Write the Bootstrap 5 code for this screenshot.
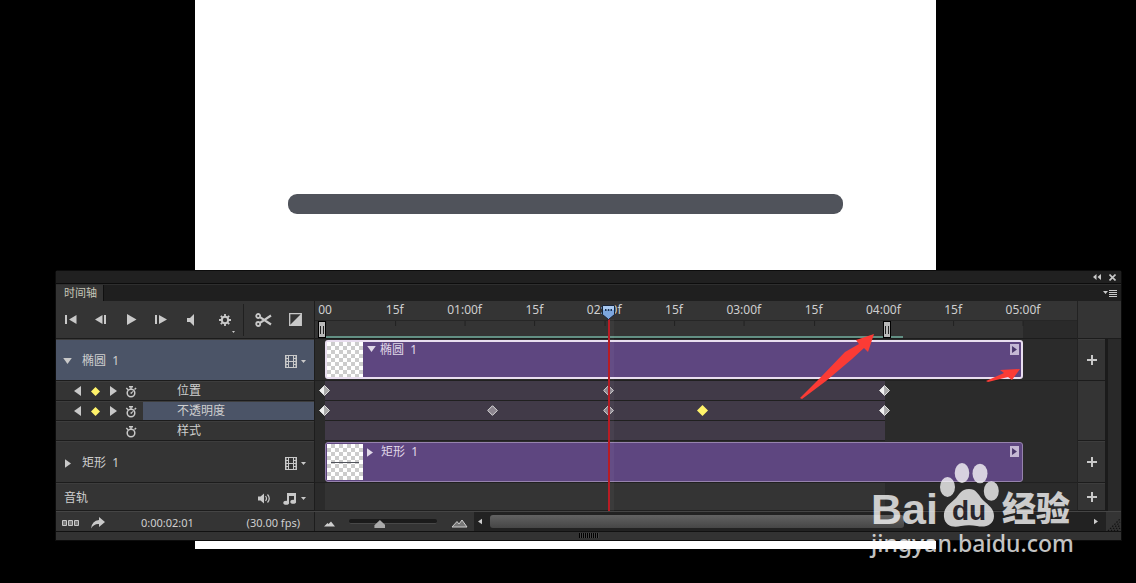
<!DOCTYPE html>
<html lang="zh-CN">
<head>
<meta charset="utf-8">
<meta name="viewport" content="width=device-width, initial-scale=1">
<title>时间轴</title>
<link href="https://cdn.jsdelivr.net/npm/bootstrap@5.3.0/dist/css/bootstrap.min.css" rel="stylesheet">
<style>
body{background:#000;color:#cfcfcf;font:12px/16px "Noto Sans","Noto Sans CJK SC",sans-serif}
.workspace{min-height:100vh;grid-template-columns:minmax(0,1fr);align-items:start}
.workspace>*{grid-area:1/1}
.artboard{background:#fff;height:549px;margin:0 200px 0 195px;padding:194px 93px 0}
.shape-bar{height:20px;border-radius:9px;background:#50535b}
.timeline{margin:270px 14px 0 55px;background:#343434;border:1px solid #0c0c0c;border-radius:3px 3px 0 0}
.title-strip{height:13px;background:#202020;border-bottom:1px solid #0c0c0c;padding-right:1px}
.tab-strip{height:17px;background:#1f1f1f;border-top:1px solid #2e2e2e}
.tab-item{background:#343434;color:#c6c6b8;font-size:11px;line-height:16px;padding:0 6px 0 8px;border-right:1px solid #101010}
.tool{display:flex;align-items:center;justify-content:center;padding:0;border:0;background:none;color:#c9c9c9}
.tool svg,.glyph{display:block;fill:currentColor}
.side{width:259px;border-right:1px solid #1d1d1d}
.h-head{height:38px}.h-layer{height:42px}.h-prop{height:20px}.h-audio{height:28px}
.side>div,.adders>div{border-bottom:1px solid #1c1c1c;border-top:1px solid #3d3d3d}
.side>.toolbar{border-top:0}
.side>.h-layer,.side>.h-audio{padding-top:2px}
.side>.h-layer{padding-left:7px}
.side>.h-prop{padding-left:12px}
.toolbar .tool{width:30px;height:34px}
.toolbar .gear{width:37px}
.divider{width:1px;height:32px;background:#202020}
.selected{background:#4b5467}
.layer-name{margin-left:10px}
.prop-name{flex:1;line-height:18px;margin-left:3px;padding-left:34px}
.key-nav{width:18px;height:18px}
.unfold{width:9px}
.gold{color:#f5ec5a}
.area{background:#2b2b2b}
.lane{margin-left:10px;margin-right:54px}
.ruler{background:#343434;height:38px;border-bottom:1px solid #1c1c1c}
.ruler-top{height:20px;border-bottom:1px solid #262626;font-size:11px}
.tick{position:absolute;top:1px;transform:translateX(-50%);line-height:15px;white-space:nowrap}
.tick::after{content:"";position:absolute;left:50%;top:19px;height:5px;width:1px;background:#222}
.ruler-low{height:17px;background:#2a2a2a;width:54px;position:absolute;right:0;top:20px}
.cache{position:absolute;left:0;bottom:0;height:2px;background:#639084}
.grip{position:absolute;bottom:0;width:8px;height:17px;border:1px solid #000;background:#b8b8b8;display:flex;justify-content:center;align-items:center;padding:0;z-index:2}
.grip::after{content:"";width:4px;height:8px;border:solid #222;border-width:0 1px}
.grip.g-start{margin-left:-7px}.grip.g-end{margin-left:-2px}
.rowline{border-bottom:1px solid #202020}
.clip-row{padding-top:1px}
.clip{height:40px;background:#5e4680;color:#e0d8e8;border:1px solid #9683ad;border-radius:3px;padding:1px}
.clip.active{height:39px;border:2px solid #e9def0;padding:0}
.thumb{width:36px;background:repeating-conic-gradient(#ccc 0 25%,#fff 0 50%) 0 0/8px 8px}
.clip .more{width:9px;height:11px;background:#c5b8d4;color:#4a376b;margin:2px 2px 0 0}
.prop-fill{width:80.2%;background:#413a48}
.audio-fill{width:80.2%;background:#343434}
.key{position:absolute;top:4px;width:11px;height:11px;margin-left:-6px}
.playhead{position:absolute;top:4px;bottom:0;width:13px;margin-left:-7px;z-index:3}
.playline{position:absolute;left:6px;top:14px;bottom:0;width:2px;background:#b81c24}
.playframe{position:absolute;left:8px;top:14px;bottom:0;width:4px;background:#ffffff0a}
.adders{width:28px;border-left:1px solid #222}
.adders .h-head{width:43px;background:#343434;border-top:0}
.vscroll{width:16px;margin-top:38px;background:#292929;border-left:3px solid #1b1b1b}
.footbar{height:20px;border-top:1px solid #454545;font-size:11px}
.foot-side{width:259px;border-right:1px solid #1d1d1d;padding:3px 14px 0 2px}
.timecode{margin-left:36px}
.zoomer{width:159px;padding:0 6px 0 9px}
.zoomer input{width:88px;height:12px;appearance:none;background:none;margin:0;display:block}
.zoomer input::-webkit-slider-runnable-track{height:5px;background:#1b1b1b;border-bottom:1px solid #484848;border-radius:2px}
.zoomer input::-webkit-slider-thumb{appearance:none;width:11px;height:8px;margin-top:1px;background:#aaa;clip-path:polygon(50% 0,100% 65%,100% 100%,0 100%,0 65%)}
.hscroll{background:#222;color:#ccc}
.hthumb{height:13px;background:linear-gradient(#626262,#464646);border-radius:3px;width:66%}
.base-strip{height:9px;border-top:1px solid #111;background:#323232}
.ridge{width:20px;height:5px;margin-top:1px;background:repeating-linear-gradient(90deg,#000 0 1px,#444 1px 2px)}
.note{position:absolute;z-index:4;fill:#fb3b35;pointer-events:none}
.watermark{justify-self:end;margin:460px 62px 0 0;color:#fff;opacity:.76;z-index:6;width:203px}
.wm-top{height:68px}
.wm-latin{font:bold 43px/37px "Liberation Sans",sans-serif;width:68px}
.wm-cjk{font:900 34px/42px "Noto Sans CJK SC",sans-serif;margin-left:3px}
.wm-url{font:500 23px/26px "Noto Sans",sans-serif;margin-top:2px}
</style>
</head>
<body>
<svg width="0" height="0" class="position-absolute" aria-hidden="true">
<symbol id="key-half" viewBox="0 0 11 11"><path d="M5.500.5 10.500 5.500 5.500 10.500z" fill="#aaa"/><path d="M5.500.5v10L.5 5.500z" fill="#f0f0f0"/><path d="m5.500.5 5 5-5 5-5-5z" fill="none" stroke="#ddd"/></symbol>
<symbol id="key-full" viewBox="0 0 11 11"><path d="m5.500.7 4.800 4.800-4.800 4.800L.7 5.500z" fill="#8b848e" stroke="#ddd"/></symbol>
<symbol id="key-gold" viewBox="0 0 11 11"><path d="m5.500 0 5.500 5.500-5.500 5.500L0 5.500z" fill="#fff36a"/></symbol>
<symbol id="film" viewBox="0 0 12 13"><path d="M0 0h12v13H0zM1.500 1v2H3V1zM1.500 4v2H3V4zM1.500 7v2H3V7zM1.500 10v2H3v-2zM4 1v5h4V1zM4 7v5h4V7zM9 1v2h1.500V1zM9 4v2h1.500V4zM9 7v2h1.500V7zM9 10v2h1.500v-2z" fill-rule="evenodd"/></symbol>
<symbol id="watch" viewBox="0 0 12 13"><circle cx="6" cy="8" r="3.800" fill="none" stroke="currentColor" stroke-width="1.500"/><path d="M4 1h4v1.500H6.700V4H5.300V2.500H4zM.8 3.500l1-1 1.800 1.800-1 1zM9 4l1.600-1.600 1 1L10 5z"/></symbol>
<symbol id="hand" viewBox="0 0 12 13"><path d="M5 8 9.500 5 6.500 9z"/></symbol>
<symbol id="down" viewBox="0 0 5 3"><path d="M0 0h5L2.500 3z"/></symbol>
<symbol id="left" viewBox="0 0 7 10"><path d="M7 0v10L0 5z"/></symbol>
<symbol id="right" viewBox="0 0 7 10"><path d="M0 0v10l7-5z"/></symbol>
<symbol id="fold" viewBox="0 0 10 7"><path d="M0 0h10L5 7z"/></symbol>
<symbol id="plus" viewBox="0 0 10 10"><path d="M4 0h2v4h4v2H6v4H4V6H0V4h4z"/></symbol>
</svg>
<main class="workspace d-grid position-relative">
  <section class="artboard" aria-label="画布"><div class="shape-bar"></div></section>

  <section class="timeline" aria-label="时间轴">
    <div class="title-strip d-flex justify-content-end align-items-center">
      <button class="tool px-1" aria-label="折叠"><svg width="8" height="6" viewBox="0 0 8 6"><path d="M3.500 0v6L0 3zM8 0v6L4.500 3z"/></svg></button>
      <button class="tool px-1" aria-label="关闭"><svg width="7" height="7" viewBox="0 0 7 7"><path d="m.5.5 6 6m0-6-6 6" stroke="currentColor" stroke-width="1.600"/></svg></button>
    </div>
    <div class="tab-strip d-flex justify-content-between">
      <div class="tab-item">时间轴</div>
      <button class="tool pe-1" aria-label="面板菜单"><svg width="14" height="9" viewBox="0 0 14 9"><path d="M0 2h5L2.500 5zM6 1h8v1H6zM6 3h8v1H6zM6 5h8v1H6zM6 7h8v1H6z"/></svg></button>
    </div>

    <div class="d-flex">
      <div class="side flex-shrink-0">
        <div class="toolbar h-head d-flex align-items-center">
          <button class="tool" aria-label="转到第一帧"><svg width="12" height="9" viewBox="0 0 12 9"><path d="M0 0h2v9H0zM11.500 0v9L4 4.500z"/></svg></button>
          <button class="tool" aria-label="上一帧"><svg width="12" height="9" viewBox="0 0 12 9"><path d="M7.500 0v9L0 4.500zM9 0h2v9H9z"/></svg></button>
          <button class="tool" aria-label="播放"><svg width="11" height="11" viewBox="0 0 11 11"><path d="M1 0v11l9.500-5.500z"/></svg></button>
          <button class="tool" aria-label="下一帧"><svg width="12" height="9" viewBox="0 0 12 9"><path d="M0 0h2v9H0zM4 0v9l8-4.500z"/></svg></button>
          <button class="tool" aria-label="音频"><svg width="8" height="12" viewBox="0 0 8 12"><path d="M0 4h3l4-4v12L3 8H0z"/></svg></button>
          <button class="tool gear position-relative" aria-label="设置"><svg width="12" height="12" viewBox="0 0 12 12"><circle cx="6" cy="6" r="3.200" fill="none" stroke="currentColor" stroke-width="2"/><path d="M6 0v2.500M6 9.500V12M0 6h2.500M9.500 6H12M1.800 1.800l1.800 1.800M8.400 8.400l1.800 1.800M10.200 1.800 8.400 3.600M3.600 8.400l-1.800 1.800" stroke="currentColor" stroke-width="1.800"/></svg><svg class="position-absolute bottom-0 end-0 mb-1 me-2" width="3" height="2"><use href="#down"/></svg></button>
          <div class="divider"></div>
          <button class="tool ms-1" aria-label="拆分"><svg width="17" height="14" viewBox="0 0 17 14"><g fill="none" stroke="currentColor" stroke-width="1.800"><circle cx="3.200" cy="3" r="2"/><circle cx="3.200" cy="11" r="2"/><path d="M5 4.200 16 11.500M5 9.800 16 2.500" stroke-width="2.200"/></g></svg></button>
          <button class="tool ms-auto me-1" aria-label="过渡效果"><svg width="13" height="13" viewBox="0 0 13 13"><path d="M.7.7h11.600v11.600H.7z" fill="none" stroke="currentColor" stroke-width="1.300"/><path d="M12 1v11H1z"/></svg></button>
        </div>
        <div class="h-layer selected d-flex align-items-center pe-2">
          <button class="tool unfold" aria-label="收起椭圆 1"><svg width="9" height="6"><use href="#fold"/></svg></button>
          <span class="layer-name">椭圆&nbsp; 1</span>
          <button class="tool gap-1 ms-auto" aria-label="视频组"><svg width="12" height="13"><use href="#film"/></svg><svg width="5" height="3"><use href="#down"/></svg></button>
        </div>
        <div class="h-prop d-flex align-items-center">
          <button class="tool key-nav" aria-label="上一关键帧"><svg width="7" height="10"><use href="#left"/></svg></button><button class="tool key-nav gold" aria-label="关键帧"><svg width="9" height="9"><use href="#key-gold"/></svg></button><button class="tool key-nav" aria-label="下一关键帧"><svg width="7" height="10"><use href="#right"/></svg></button><button class="tool key-nav" aria-label="秒表"><svg width="12" height="13"><use href="#watch"/><use href="#hand"/></svg></button>
          <span class="prop-name">位置</span>
        </div>
        <div class="h-prop d-flex align-items-center">
          <button class="tool key-nav" aria-label="上一关键帧"><svg width="7" height="10"><use href="#left"/></svg></button><button class="tool key-nav gold" aria-label="关键帧"><svg width="9" height="9"><use href="#key-gold"/></svg></button><button class="tool key-nav" aria-label="下一关键帧"><svg width="7" height="10"><use href="#right"/></svg></button><button class="tool key-nav" aria-label="秒表"><svg width="12" height="13"><use href="#watch"/><use href="#hand"/></svg></button>
          <span class="prop-name selected">不透明度</span>
        </div>
        <div class="h-prop d-flex align-items-center">
          <span class="key-nav"></span><span class="key-nav"></span><span class="key-nav"></span><button class="tool key-nav" aria-label="秒表"><svg width="12" height="13"><use href="#watch"/></svg></button>
          <span class="prop-name">样式</span>
        </div>
        <div class="h-layer d-flex align-items-center pe-2">
          <button class="tool unfold" aria-label="展开矩形 1"><svg width="6" height="9"><use href="#right"/></svg></button>
          <span class="layer-name">矩形&nbsp; 1</span>
          <button class="tool gap-1 ms-auto" aria-label="视频组"><svg width="12" height="13"><use href="#film"/></svg><svg width="5" height="3"><use href="#down"/></svg></button>
        </div>
        <div class="h-audio d-flex align-items-center ps-2 pe-2">
          <span>音轨</span>
          <button class="tool ms-auto me-2" aria-label="静音"><svg width="13" height="11" viewBox="0 0 13 11"><path d="M0 3.500h2.500L6 .5v10l-3.500-3H0z"/><path d="M7.500 3q2 2.500 0 5M9.500 1.500q3.500 4 0 8" fill="none" stroke="currentColor" stroke-width="1.200"/></svg></button>
          <button class="tool gap-1 ms-1" aria-label="音频选项"><svg width="14" height="13" viewBox="0 0 14 13"><path d="M4 1h9v9h-2V4H6v7H4z"/><ellipse cx="3.200" cy="10.800" rx="2.900" ry="2"/><ellipse cx="10.200" cy="9.800" rx="2.900" ry="2"/></svg><svg width="5" height="3"><use href="#down"/></svg></button>
        </div>
      </div>

      <div class="area flex-grow-1 position-relative">
        <div class="ruler position-relative">
          <div class="ruler-top"></div><div class="ruler-low"></div>
          <div class="lane position-absolute top-0 bottom-0 start-0 end-0" id="ruler">
            <div class="cache" style="width:82.800%"></div>
            <button class="grip g-start" style="left:0%" aria-label="工作区开始"></button>
            <button class="grip g-end" style="left:80.200%" aria-label="工作区结束"></button>
          </div>
        </div>
        <div class="h-layer clip-row rowline"><div class="lane"><div class="clip active d-flex align-items-stretch">
          <div class="thumb"></div><svg class="glyph mt-1 ms-1" width="9" height="6"><use href="#fold"/></svg><span class="ms-1">椭圆&nbsp; 1</span>
          <button class="tool more ms-auto" aria-label="剪辑选项"><svg width="5" height="7"><use href="#right"/></svg></button></div></div></div>
        <div class="h-prop"><div class="lane position-relative h-100 keys" data-keys="0h 40.7f 80.2h"></div></div>
        <div class="h-prop"><div class="lane position-relative h-100 keys" data-keys="0h 24.1f 40.7f 54.1g 80.2h"></div></div>
        <div class="h-prop"><div class="lane position-relative h-100 keys" data-keys=""></div></div>
        <div class="h-layer clip-row rowline"><div class="lane"><div class="clip d-flex align-items-stretch">
          <div class="thumb d-flex align-items-center justify-content-center"><svg width="28" height="1"><path d="M0 0h28v1H0z" fill="#50535b"/></svg></div><svg class="glyph mt-1 ms-1" width="6" height="9"><use href="#right"/></svg><span class="ms-2">矩形&nbsp; 1</span>
          <button class="tool more ms-auto" aria-label="剪辑选项"><svg width="5" height="7"><use href="#right"/></svg></button></div></div></div>
        <div class="h-audio rowline"><div class="lane h-100"><div class="audio-fill h-100"></div></div></div>
        <div class="lane position-absolute top-0 bottom-0 start-0 end-0 pe-none">
          <div class="playhead" style="left:40.700%"><div class="playframe"></div><div class="playline"></div><svg class="position-absolute top-0 start-0" width="13" height="15" viewBox="0 0 13 15"><path d="M.5.500h12v9l-6 5-6-5z" fill="#7da7df" stroke="#17243a"/><path d="M1 1h11v4H1z" fill="#a9c9f0"/><path d="M3 4h1.500v2H3zM5.800 4h1.500v2H5.800zM8.500 4H10v2H8.500z" fill="#1b3355"/></svg></div>
          <svg class="note" style="left:68.100%;top:33px" width="75" height="66" viewBox="0 0 75 66"><path d="M0 64 20 44 45 18 59 10 56 6 74 0 68 18 64 14 52 25 26 47 2 65z"/></svg>
          <svg class="note" style="left:94.700%;top:66px" width="34" height="16" viewBox="0 0 34 16"><path d="M0 14 18 6 14 3 34 2 26 13 22 10 2 15z"/></svg>
        </div>
      </div>

      <div class="adders flex-shrink-0">
        <div class="h-head"></div>
        <div class="h-layer d-flex"><button class="tool flex-fill" aria-label="添加媒体"><svg width="10" height="10"><use href="#plus"/></svg></button></div>
        <div class="h-prop border-0"></div><div class="h-prop border-0"></div><div class="h-prop border-top-0"></div>
        <div class="h-layer d-flex"><button class="tool flex-fill" aria-label="添加媒体"><svg width="10" height="10"><use href="#plus"/></svg></button></div>
        <div class="h-audio d-flex"><button class="tool flex-fill" aria-label="添加音频"><svg width="10" height="10"><use href="#plus"/></svg></button></div>
      </div>
      <div class="vscroll flex-shrink-0"></div>
    </div>

    <div class="footbar d-flex">
      <div class="foot-side flex-shrink-0 d-flex align-items-center">
        <div class="d-flex gap-2">
          <button class="tool ps-1" aria-label="转换为帧动画"><svg width="17" height="8" viewBox="0 0 17 8"><path d="M.5 1.500h4v5h-4zM6.500 1.500h4v5h-4zM12.500 1.500h4v5h-4z" fill="#777" stroke="currentColor"/></svg></button>
          <button class="tool ps-1" aria-label="渲染视频"><svg width="14" height="12" viewBox="0 0 14 12"><path d="M8 0l6 5-6 5V7Q3 6.500 0 11.500 1 3.500 8 3z"/></svg></button>
        </div>
        <span class="timecode">0:00:02:01</span><span class="ms-auto">(30.00 fps)</span>
      </div>
      <label class="zoomer flex-shrink-0 d-flex align-items-center justify-content-between">
        <svg class="glyph mt-1" width="11" height="6" viewBox="0 0 11 6"><path d="M0 5.500 3.500 2l1 1L7 .5l4 5z"/></svg>
        <input type="range" min="0" max="100" value="33" aria-label="时间轴缩放">
        <svg class="glyph mt-1" width="17" height="9" viewBox="0 0 17 9"><path d="m1 8 5-5.500L8 5l3-4 5 7z" fill="#777" stroke="currentColor"/></svg>
      </label>
      <div class="hscroll flex-grow-1 d-flex align-items-center ps-1">
        <svg class="glyph me-2" width="4" height="7"><use href="#left"/></svg>
        <div class="hthumb"></div>
        <svg class="glyph ms-auto me-2" width="4" height="7"><use href="#right"/></svg>
      </div>
      <svg class="glyph flex-shrink-0 align-self-end" width="15" height="14" viewBox="0 0 15 14"><path d="M2 14 14 2M5 14l9-9M8 14l6-6M11 14l3-3" stroke="#111" stroke-width="1.200" stroke-dasharray="1.500 1.500"/></svg>
    </div>
    <div class="base-strip d-flex justify-content-center"><div class="ridge"></div></div>
  </section>

  <aside class="watermark">
    <div class="wm-top d-flex align-items-end">
      <span class="wm-latin">Bai</span>
      <svg width="60" height="68" viewBox="0 0 60 68" fill="#fff" class="flex-shrink-0"><ellipse cx="8.500" cy="27" rx="7.500" ry="10"/><ellipse cx="23" cy="13" rx="7.300" ry="10"/><ellipse cx="41" cy="13.500" rx="7.500" ry="9.800"/><ellipse cx="52.300" cy="31" rx="7.500" ry="9.800"/><path d="M30 29c-8 0-10 6-14 10S4 47 5 57c1 9 9 11 17 9q8-1.500 16 0c8 2 17-1 17-10 0-9-8-12-12-17s-6-10-13-10z"/><text x="30" y="60" text-anchor="middle" font-family="Liberation Sans" font-size="28" font-weight="bold" fill="#2b2730">du</text></svg>
      <span class="wm-cjk">经验</span>
    </div>
    <div class="wm-url">jingyan.baidu.com</div>
  </aside>
</main>
<script src="https://cdn.jsdelivr.net/npm/bootstrap@5.3.0/dist/js/bootstrap.bundle.min.js"></script>
<script>
// Ruler labels, one every 15 frames over five seconds
const ruler = document.getElementById('ruler');
for (let i = 0; i <= 10; i++) {
  const text = i === 0 ? '00' : i % 2 ? '15f' : '0' + i / 2 + ':00f';
  ruler.insertAdjacentHTML('beforeend', `<span class="tick" style="left:${i * 10}%">${text}</span>`);
}
// Key frames: position in percent plus a shape letter
const shapes = {h: 'key-half', f: 'key-full', g: 'key-gold'};
document.querySelectorAll('.keys').forEach(lane => {
  lane.innerHTML = '<div class="prop-fill h-100 rowline"></div>' + lane.dataset.keys.split(' ').filter(Boolean).map(k =>
    `<svg class="key" style="left:${parseFloat(k)}%"><use href="#${shapes[k.slice(-1)]}"/></svg>`).join('');
});
</script>
</body>
</html>
